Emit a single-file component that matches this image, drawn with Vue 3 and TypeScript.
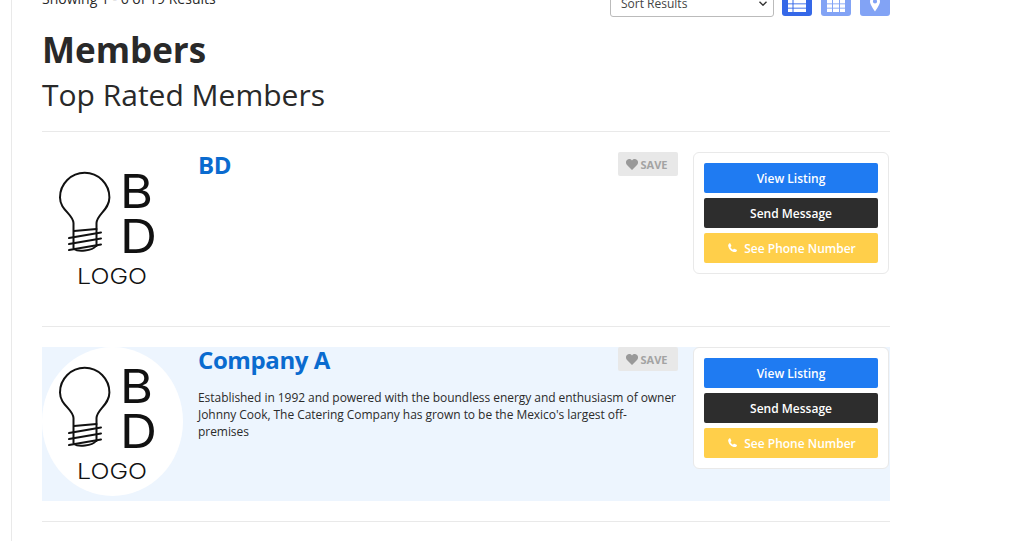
<script setup lang="ts">
interface Member {
  name: string
  text: string
  featured: boolean
}

const members: Member[] = [
  { name: 'BD', text: '', featured: false },
  {
    name: 'Company A',
    text: "Established in 1992 and powered with the boundless energy and enthusiasm of owner Johnny Cook, The Catering Company has grown to be the Mexico's largest off-premises",
    featured: true,
  },
]
</script>

<template>
  <main class="page">
    <div class="toolbar">
      <span class="count">Showing 1 - 6 of 19 Results</span>
      <div class="controls">
        <div class="sort">
          <span>Sort Results</span>
          <svg width="8" height="5" viewBox="0 0 8 5"><path d="M.5.7L4 4.200 7.500.7" fill="none" stroke="#333" stroke-width="1.400" /></svg>
        </div>
        <button class="view active">
          <svg width="18" height="12" viewBox="0 0 18 12" fill="#fff">
            <rect x="0" y="0" width="4.500" height="3.400" /><rect x="5.500" y="0" width="12.500" height="3.400" />
            <rect x="0" y="4.300" width="4.500" height="3.400" /><rect x="5.500" y="4.300" width="12.500" height="3.400" />
            <rect x="0" y="8.600" width="4.500" height="3.400" /><rect x="5.500" y="8.600" width="12.500" height="3.400" />
          </svg>
        </button>
        <button class="view">
          <svg width="18" height="12" viewBox="0 0 18 12" fill="#fff">
            <rect x="0" y="0" width="5" height="3.400" /><rect x="6" y="0" width="6" height="3.400" /><rect x="13" y="0" width="5" height="3.400" />
            <rect x="0" y="4.300" width="5" height="3.400" /><rect x="6" y="4.300" width="6" height="3.400" /><rect x="13" y="4.300" width="5" height="3.400" />
            <rect x="0" y="8.600" width="5" height="3.400" /><rect x="6" y="8.600" width="6" height="3.400" /><rect x="13" y="8.600" width="5" height="3.400" />
          </svg>
        </button>
        <button class="view">
          <svg width="10" height="16" viewBox="0 0 12 18"><path fill="#fff" fill-rule="evenodd" d="M6 0a6 6 0 0 1 6 6c0 3.500-3.500 8-6 12C3.500 14 0 9.500 0 6a6 6 0 0 1 6-6zm0 3.500a2.500 2.500 0 1 0 0 5 2.500 2.500 0 0 0 0-5z" /></svg>
        </button>
      </div>
    </div>

    <h1>Members</h1>
    <h2>Top Rated Members</h2>

    <section v-for="m in members" :key="m.name" class="row">
      <article class="card" :class="{ featured: m.featured }">
        <div class="logo">
          <svg width="141" height="149" viewBox="0 0 141 149">
            <g fill="none" stroke="#111" stroke-width="2" stroke-linecap="round">
              <path d="M31.500 96V71C31 62 18 58 18 45.500A24.700 24.700 0 1 1 67.400 45.500C67.400 58 55 62 54.500 71V94" />
              <path d="M32 79L54.500 77" />
              <path d="M27 86L59 80.500" />
              <path d="M27 92L59 86.500" />
              <path d="M27 98L59 92.500" />
              <path d="M32 97C36 100 50 99 54 94" />
            </g>
            <text x="78" y="56" class="big" textLength="33" lengthAdjust="spacingAndGlyphs">B</text>
            <text x="78" y="100.500" class="big" textLength="37" lengthAdjust="spacingAndGlyphs">D</text>
            <text x="35" y="132" class="small" textLength="70" lengthAdjust="spacingAndGlyphs">LOGO</text>
          </svg>
        </div>
        <div class="body">
          <div class="head">
            <h3>{{ m.name }}</h3>
            <span class="save">
              <svg width="12" height="11" viewBox="0 0 12 11"><path fill="#999" d="M6 11L1 6C-.5 4.500-.3 2 1 .9 2.500-.4 4.700-.2 6 1.500 7.300-.2 9.500-.4 11 .9c1.300 1.100 1.500 3.600 0 5.100z" /></svg>
              SAVE
            </span>
          </div>
          <p v-if="m.text">{{ m.text }}</p>
        </div>
        <div class="actions">
          <button class="btn blue">View Listing</button>
          <button class="btn dark">Send Message</button>
          <button class="btn yellow">
            <svg width="10" height="10" viewBox="0 0 10 10"><path fill="#fff" d="M2.300.4l1 2.200c.1.300 0 .6-.2.800l-.8.700c.5 1.100 1.400 2 2.600 2.600l.7-.8c.2-.2.500-.3.800-.2l2.200 1c.3.100.4.400.3.700-.3 1-1 1.600-2 1.600C3.500 9 1 6.500.2 3 0 2 .6.900 1.600.3c.3-.1.600-.1.700.1z" /></svg>
            See Phone Number
          </button>
        </div>
      </article>
    </section>
  </main>
</template>

<style scoped>
.page {
  box-sizing: border-box;
  height: 541px;
  overflow: hidden;
  margin-left: 11px;
  width: 879px;
  padding-left: 30px;
  border-left: 1px solid #e9e9e9;
  font-family: "Open Sans", "Liberation Sans", sans-serif;
  color: #292929;
}

.toolbar {
  display: flex;
  justify-content: space-between;
  margin-top: -15px;
  height: 32px;
}

.count {
  padding-top: 4px;
  font-size: 14px;
  line-height: 19px;
}

.controls {
  display: flex;
  gap: 9px;
}

.sort {
  box-sizing: border-box;
  width: 164px;
  height: 32px;
  margin-right: -1px;
  padding: 4px 6px 0 10px;
  display: flex;
  align-items: center;
  justify-content: space-between;
  background: #fff;
  border: 1px solid #bbb;
  border-radius: 3px;
  font-size: 12px;
  color: #444;
}

.view {
  width: 30px;
  height: 31px;
  padding: 0 0 4px;
  display: flex;
  align-items: flex-end;
  justify-content: center;
  background: #82a3f5;
  border: 0;
  border-radius: 3px;
}

.view.active {
  background: #3568e8;
}

h1 {
  margin: 8px 0 0;
  font-size: 35px;
  line-height: 49px;
  font-weight: 700;
}

h2 {
  margin: 0;
  padding-bottom: 16px;
  font-size: 30px;
  line-height: 41px;
  font-weight: 400;
}

.row {
  border-top: 1px solid #e9e9e9;
  padding: 20px 0;
}

.row:last-child {
  border-bottom: 1px solid #e9e9e9;
}

.card {
  display: flex;
  height: 154px;
}

.card.featured {
  background: #edf5fe;
}

.logo {
  width: 141px;
  height: 149px;
  flex: none;
}

.featured .logo {
  background: #fff;
  border-radius: 50%;
}

.logo svg {
  display: block;
}

.big {
  font-family: Inter, sans-serif;
  font-size: 47px;
  font-weight: 400;
  fill: #111;
}

.small {
  font-family: Inter, sans-serif;
  font-size: 22px;
  font-weight: 300;
  fill: #111;
}

.body {
  flex: 1;
  margin-left: 15px;
  min-width: 0;
}

.head {
  display: flex;
  justify-content: space-between;
  align-items: flex-start;
}

h3 {
  margin: -1px 0 0;
  font-size: 24px;
  line-height: 28px;
  font-weight: 700;
  letter-spacing: -0.4px;
  color: #0a6bcf;
}

.save {
  box-sizing: border-box;
  width: 60px;
  height: 24px;
  padding-right: 3px;
  display: flex;
  align-items: center;
  justify-content: center;
  gap: 3px;
  background: #e8e8e8;
  border-radius: 2px;
  font-size: 11px;
  font-weight: 700;
  color: #a3a3a3;
}

p {
  margin: 15px 0 0;
  max-width: 478px;
  font-size: 12px;
  line-height: 17px;
  letter-spacing: -0.05px;
  color: #2b2b2b;
}

.actions {
  box-sizing: border-box;
  flex: none;
  width: 196px;
  height: 122px;
  margin: 0 1px 0 15px;
  padding: 10px;
  display: flex;
  flex-direction: column;
  gap: 5px;
  background: #fff;
  border: 1px solid #e9e9e9;
  border-radius: 6px;
}

.btn {
  height: 30px;
  padding: 0;
  display: flex;
  align-items: center;
  justify-content: center;
  gap: 5px;
  border: 0;
  border-radius: 2px;
  font-family: inherit;
  font-size: 12px;
  font-weight: 600;
  color: #fff;
}

.blue {
  background: #1f7bf2;
}

.dark {
  background: #2d2d2d;
}

.yellow {
  padding-left: 2px;
  gap: 6px;
  background: #ffcf4a;
}
</style>
